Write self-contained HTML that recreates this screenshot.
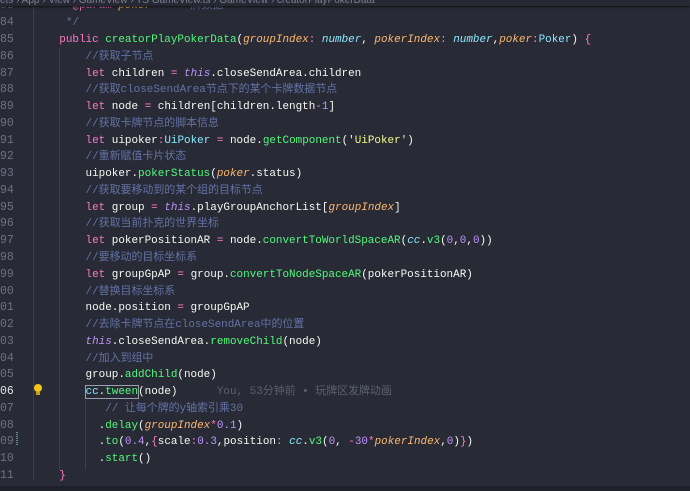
<!DOCTYPE html>
<html><head><meta charset="utf-8"><style>
html,body{margin:0;padding:0}
body{width:690px;height:491px;overflow:hidden;background:#282a36;position:relative;font-family:"Liberation Mono","Noto Sans CJK SC",monospace;font-size:10.95px;color:#f8f8f2}
.ln{position:absolute;left:0;width:13px;text-align:right;color:#6d7183;white-space:pre;line-height:16.77px;font-size:11.5px}
.c{position:absolute;left:33px;white-space:pre;line-height:16.77px}
.k{color:#ff79c6}.f{color:#50fa7b}.p{color:#ffb86c;font-style:italic}.t{color:#8be9fd;font-style:italic}.cy{color:#8be9fd}
.n{color:#bd93f9}.cm{color:#6272a4}.th{color:#bd93f9;font-style:italic}.s{color:#f1fa8c}
.g{position:absolute;width:1px;background:#3a3d4c}
</style></head><body>
<div class="g" style="left:33px;top:0;height:480px"></div>
<div class="g" style="left:59px;top:48px;height:422px"></div>
<div class="g" style="left:85px;top:400px;height:70px"></div>
<div id="code"></div>
<div class="ln" style="top:-2px">83</div><div class="c" style="top:-2px"><span class="cm">    * </span><span class="k">@param</span><span class="p"> poker</span><span class="cm">      牌数据</span></div>
<div style="position:absolute;left:0;top:0;width:690px;height:6px;background:#262833;box-shadow:0 1px 2px #111;color:#7d8090;font-size:10px;line-height:2px;overflow:hidden;white-space:pre;font-family:'Liberation Sans','Noto Sans CJK SC',sans-serif">ets › App › View › GameView › TS GameView.ts › GameView › creatorPlayPokerData</div>
<script>
var L=[
[84,'    <span class="cm"> */</span>'],
[85,'    <span class="k">public</span> <span class="f">creatorPlayPokerData</span>(<span class="p">groupIndex</span><span class="k">:</span> <span class="t">number</span>, <span class="p">pokerIndex</span><span class="k">:</span> <span class="t">number</span>,<span class="p">poker</span><span class="k">:</span><span class="cy">Poker</span>) <span class="k">{</span>'],
[86,'        <span class="cm">//获取子节点</span>'],
[87,'        <span class="k">let</span> children <span class="k">=</span> <span class="th">this</span>.closeSendArea.children'],
[88,'        <span class="cm">//获取closeSendArea节点下的某个卡牌数据节点</span>'],
[89,'        <span class="k">let</span> node <span class="k">=</span> children[children.length<span class="k">-</span><span class="n">1</span>]'],
[90,'        <span class="cm">//获取卡牌节点的脚本信息</span>'],
[91,'        <span class="k">let</span> uipoker<span class="k">:</span><span class="cy">UiPoker</span> <span class="k">=</span> node.<span class="f">getComponent</span>(<span class="s">\'UiPoker\'</span>)'],
[92,'        <span class="cm">//重新赋值卡片状态</span>'],
[93,'        uipoker.<span class="f">pokerStatus</span>(<span class="p">poker</span>.status)'],
[94,'        <span class="cm">//获取要移动到的某个组的目标节点</span>'],
[95,'        <span class="k">let</span> group <span class="k">=</span> <span class="th">this</span>.playGroupAnchorList[<span class="p">groupIndex</span>]'],
[96,'        <span class="cm">//获取当前扑克的世界坐标</span>'],
[97,'        <span class="k">let</span> pokerPositionAR <span class="k">=</span> node.<span class="f">convertToWorldSpaceAR</span>(<span class="t">cc</span>.<span class="f">v3</span>(<span class="n">0</span>,<span class="n">0</span>,<span class="n">0</span>))'],
[98,'        <span class="cm">//要移动的目标坐标系</span>'],
[99,'        <span class="k">let</span> groupGpAP <span class="k">=</span> group.<span class="f">convertToNodeSpaceAR</span>(pokerPositionAR)'],
[100,'        <span class="cm">//替换目标坐标系</span>'],
[101,'        node.position <span class="k">=</span> groupGpAP'],
[102,'        <span class="cm">//去除卡牌节点在closeSendArea中的位置</span>'],
[103,'        <span class="th">this</span>.closeSendArea.<span class="f">removeChild</span>(node)'],
[104,'        <span class="cm">//加入到组中</span>'],
[105,'        group.<span class="f">addChild</span>(node)'],
[106,'        <span style="outline:1px solid #9aa0b0;outline-offset:0"><span class="cy">cc</span>.<span class="f">tween</span></span>(node)      <span style="color:#5c6070">You, 53分钟前 • 玩牌区发牌动画</span>'],
[107,'           <span class="cm">// 让每个牌的y轴索引乘30</span>'],
[108,'          .<span class="f">delay</span>(<span class="p">groupIndex</span><span class="k">*</span><span class="n">0.1</span>)'],
[109,'          .<span class="f">to</span>(<span class="n">0.4</span>,<span class="k">{</span>scale<span class="k">:</span><span class="n">0.3</span>,position<span class="k">:</span> <span class="t">cc</span>.<span class="f">v3</span>(<span class="n">0</span>, <span class="k">-</span><span class="n">30</span><span class="k">*</span><span class="p">pokerIndex</span>,<span class="n">0</span>)<span class="k">}</span>)'],
[110,'          .<span class="f">start</span>()'],
[111,'    <span class="k">}</span>']];
var h='';L.forEach(function(l){var top=39+(l[0]-85)*16.77-7;
h+='<div class="ln" style="top:'+top+'px;'+(l[0]==106?'color:#e0e0e0':'')+'">'+String(l[0]).slice(-2)+'</div><div class="c" style="top:'+top+'px">'+l[1]+'</div>';});
document.getElementById('code').innerHTML=h;
</script>
<div style="position:absolute;left:34px;top:384px;width:8px;height:8px;border-radius:50%;background:#f5c518"></div>
<div style="position:absolute;left:36px;top:392px;width:4px;height:3px;background:#c9a015"></div>
<div style="position:absolute;left:16px;top:432px;width:2px;height:14px;background:repeating-linear-gradient(#6a8a9a 0 1px,transparent 1px 2px)"></div>
<div style="position:absolute;left:0;top:486px;width:690px;height:5px;background:#1f2029"></div>
</body></html>
